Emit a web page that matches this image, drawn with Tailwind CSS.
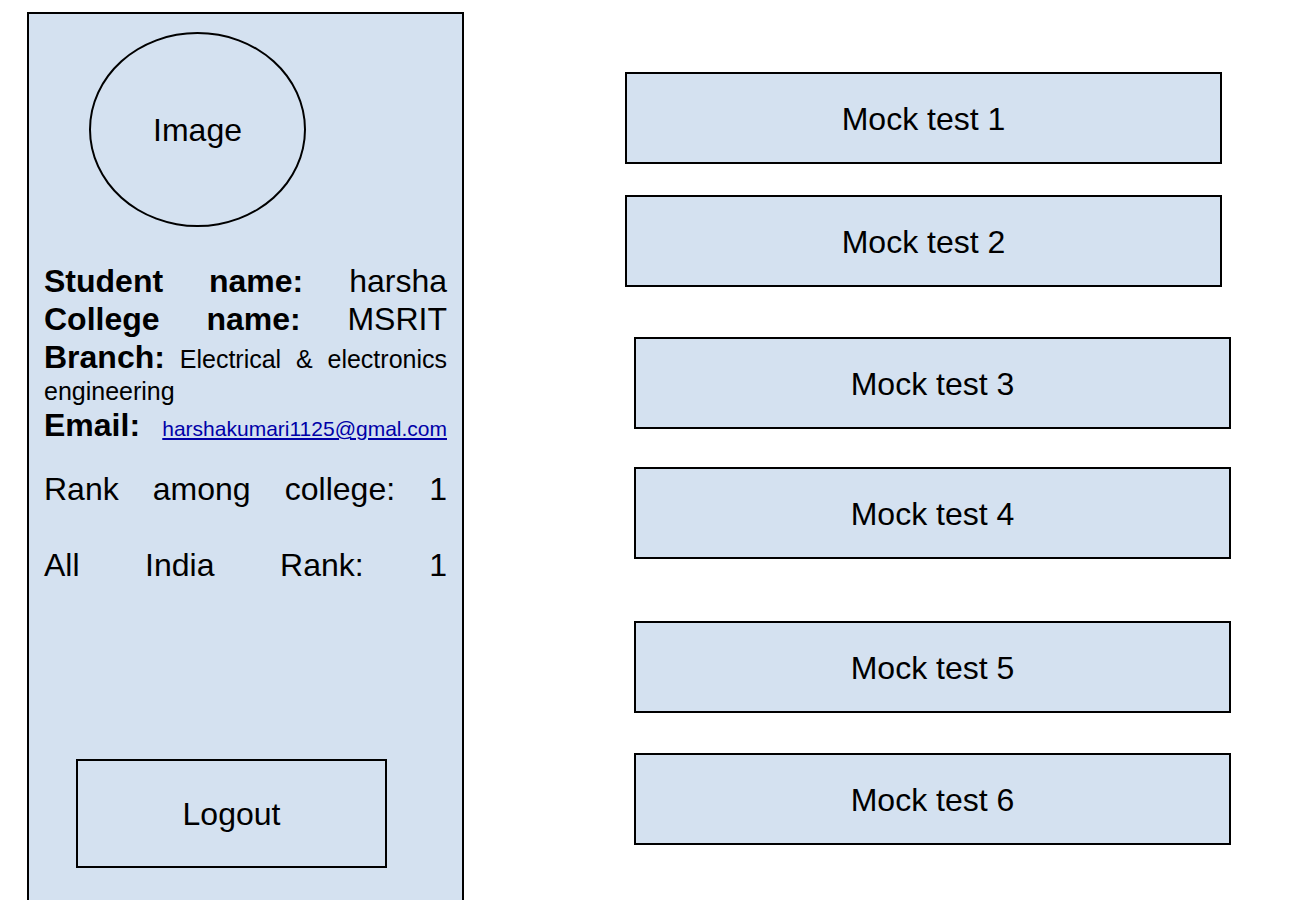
<!DOCTYPE html>
<html lang="en">
<head>
<meta charset="utf-8">
<meta name="viewport" content="width=device-width, initial-scale=1">
<title>Student dashboard</title>
<script src="https://cdn.jsdelivr.net/npm/@tailwindcss/browser@4"></script>
</head>
<body class="bg-white font-['Liberation_Sans',Arial,sans-serif] text-[32px] leading-[38px] text-black">
<div class="flex min-h-screen pl-[27px]">
  <aside class="mt-3 flex w-[437px] shrink-0 flex-col border-2 border-b-0 border-black bg-[#d4e1f0] px-[15px]">
    <div class="mt-[18px] ml-[45px] flex h-[195px] w-[217px] shrink-0 items-center justify-center rounded-[50%] border-2 border-black">Image</div>
    <div class="mt-[35px]">
      <p class="flex justify-between"><b>Student</b> <b>name:</b> <span>harsha</span></p>
      <p class="flex justify-between"><b>College</b> <b>name:</b> <span>MSRIT</span></p>
      <p class="text-justify text-[25px] leading-[30px]"><b class="text-[32px] leading-[38px]">Branch:</b> <span>Electrical &amp; electronics engineering</span></p>
      <p class="flex items-baseline justify-between"><b>Email:</b> <a href="mailto:harshakumari1125@gmal.com" class="text-[21px] text-[#0000a8] underline">harshakumari1125@gmal.com</a></p>
    </div>
    <p class="mt-[22px] flex justify-between"><span>Rank</span> <span>among</span> <span>college:</span> <span>1</span></p>
    <p class="mt-[38px] flex justify-between"><span>All</span> <span>India</span> <span>Rank:</span> <span>1</span></p>
    <button type="button" class="mt-auto mb-8 ml-8 h-[109px] w-[311px] shrink-0 border-2 border-black">Logout</button>
  </aside>
  <main class="flex flex-1 flex-col pt-[72px] pr-[77px] pl-[161px]">
    <button type="button" class="mr-[9px] h-[92px] border-2 border-black bg-[#d4e1f0] pt-[2px]">Mock test 1</button>
    <button type="button" class="mt-[31px] mr-[9px] h-[92px] border-2 border-black bg-[#d4e1f0] pt-[2px]">Mock test 2</button>
    <button type="button" class="mt-[50px] ml-[9px] h-[92px] border-2 border-black bg-[#d4e1f0] pt-[2px]">Mock test 3</button>
    <button type="button" class="mt-[38px] ml-[9px] h-[92px] border-2 border-black bg-[#d4e1f0] pt-[2px]">Mock test 4</button>
    <button type="button" class="mt-[62px] ml-[9px] h-[92px] border-2 border-black bg-[#d4e1f0] pt-[2px]">Mock test 5</button>
    <button type="button" class="mt-[40px] ml-[9px] h-[92px] border-2 border-black bg-[#d4e1f0] pt-[2px]">Mock test 6</button>
  </main>
</div>
</body>
</html>
